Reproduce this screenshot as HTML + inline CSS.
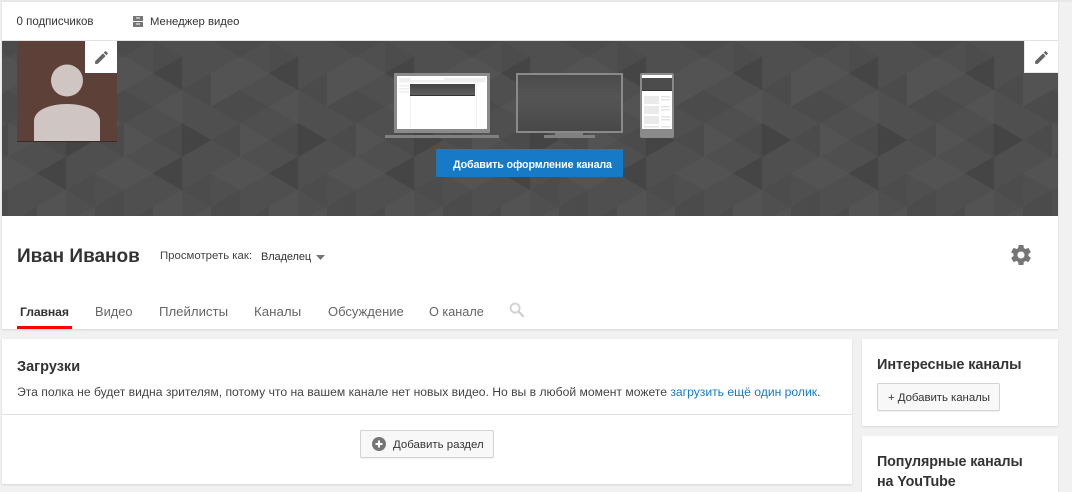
<!DOCTYPE html>
<html lang="ru"><head><meta charset="utf-8"><title>Канал</title>
<style>
html,body{margin:0;padding:0;width:1072px;height:492px;overflow:hidden;background:#f1f1f1;font-family:"Liberation Sans",sans-serif}
#w{position:absolute;left:0;top:0;width:1072px;height:492px;overflow:hidden;background:#f1f1f1}
.b{position:absolute;background:#fff}
.t{position:absolute;white-space:nowrap;line-height:16px;height:16px}
svg{position:absolute;display:block}
.card{box-shadow:0 1px 2px rgba(0,0,0,.12)}
.btn{position:absolute;box-sizing:border-box;background:#f8f8f8;border:1px solid #d3d3d3;border-radius:2px;box-shadow:0 1px 0 rgba(0,0,0,.05)}
</style></head><body><div id="w">
<div class="b" style="left:0;top:0;width:1072px;height:2px;background:#e8e8e8"></div>
<div class="b card" style="left:2px;top:2px;width:1056px;height:327px"></div>
<div class="b" style="left:2px;top:40px;width:1056px;height:1px;background:#e2e2e2"></div>

<svg style="left:2px;top:41px" width="1056" height="175" viewBox="2 41 1056 175">
<defs><pattern id="p" patternUnits="userSpaceOnUse" x="124" y="0" width="116" height="400">
<rect width="116" height="400" fill="#4f4f4f"/>
<g stroke-width=".4">
<polygon points="0,23.3 0,56.7 29,40" fill="#4b4b4b" stroke="#4b4b4b"/>
<polygon points="0,56.7 0,90 29,73.3" fill="#535353" stroke="#535353"/>
<polygon points="0,90 0,123.3 29,106.7" fill="#4b4b4b" stroke="#4b4b4b"/>
<polygon points="0,123.3 0,156.7 29,140" fill="#535353" stroke="#535353"/>
<polygon points="0,156.7 0,190 29,173.3" fill="#535353" stroke="#535353"/>
<polygon points="29,206.7 29,240 0,223.3" fill="#4b4b4b" stroke="#4b4b4b"/>
<polygon points="29,40 29,73.3 58,56.7" fill="#4c4c4c" stroke="#4c4c4c"/>
<polygon points="29,206.7 29,240 58,223.3" fill="#535353" stroke="#535353"/>
<polygon points="58,56.7 58,90 29,73.3" fill="#454545" stroke="#454545"/>
<polygon points="58,90 58,123.3 29,106.7" fill="#535353" stroke="#535353"/>
<polygon points="58,123.3 58,156.7 29,140" fill="#4b4b4b" stroke="#4b4b4b"/>
<polygon points="58,156.7 58,190 29,173.3" fill="#454545" stroke="#454545"/>
<polygon points="58,190 58,223.3 29,206.7" fill="#535353" stroke="#535353"/>
<polygon points="58,123.3 58,156.7 87,140" fill="#444" stroke="#444"/>
<polygon points="87,73.3 87,106.7 58,90" fill="#4b4b4b" stroke="#4b4b4b"/>
<polygon points="87,173.3 87,206.7 58,190" fill="#4c4c4c" stroke="#4c4c4c"/>
<polygon points="87,206.7 87,240 58,223.3" fill="#535353" stroke="#535353"/>
<polygon points="87,73.3 87,106.7 116,90" fill="#535353" stroke="#535353"/>
<polygon points="87,206.7 87,240 116,223.3" fill="#4b4b4b" stroke="#4b4b4b"/>
<polygon points="116,23.3 116,56.7 87,40" fill="#4b4b4b" stroke="#4b4b4b"/>
<polygon points="116,56.7 116,90 87,73.3" fill="#535353" stroke="#535353"/>
<polygon points="116,90 116,123.3 87,106.7" fill="#4b4b4b" stroke="#4b4b4b"/>
<polygon points="116,123.3 116,156.7 87,140" fill="#4b4b4b" stroke="#4b4b4b"/>
<polygon points="116,156.7 116,190 87,173.3" fill="#535353" stroke="#535353"/>
<polygon points="116,190 116,223.3 87,206.7" fill="#4b4b4b" stroke="#4b4b4b"/>
</g></pattern>
<linearGradient id="g" x1="0" y1="0" x2="0" y2="1"><stop offset="0" stop-color="#444"/><stop offset="1" stop-color="#5f5f5f"/></linearGradient>
<linearGradient id="tv" x1="0" y1="0" x2="0" y2="1"><stop offset="0" stop-color="#4b4b4b"/><stop offset=".4" stop-color="#555"/><stop offset="1" stop-color="#484848"/></linearGradient>
</defs>
<rect x="2" y="41" width="1056" height="175" fill="url(#p)"/>
<!-- laptop -->
<rect x="394" y="73" width="96" height="60" rx="1" fill="#8a8a8a"/>
<rect x="397" y="76" width="90" height="53" fill="#fff"/>
<rect x="399" y="78" width="86" height="4.5" fill="#efefef"/>
<rect x="411" y="78" width="33" height="2" fill="#fff"/>
<rect x="399" y="85" width="10" height="1.5" fill="#eee"/><rect x="399" y="88" width="10" height="1.5" fill="#eee"/><rect x="399" y="91" width="10" height="1.5" fill="#eee"/>
<rect x="410" y="84" width="65" height="11" fill="url(#g)"/>
<rect x="410" y="95" width="65" height="1" fill="#333"/>
<rect x="410" y="96" width="1" height="32" fill="#f2f2f2"/><rect x="476" y="84" width="1" height="44" fill="#f2f2f2"/>
<rect x="385" y="135" width="114" height="3" fill="#808080"/>
<!-- tv -->
<rect x="516" y="73" width="107" height="60" fill="#8a8a8a"/>
<rect x="518" y="75" width="103" height="56" fill="url(#tv)"/>
<rect x="555" y="133" width="28" height="2" fill="#808080"/>
<rect x="544" y="135" width="51" height="3" fill="#808080"/>
<!-- phone -->
<rect x="640" y="73" width="34" height="65" rx="2" fill="#8a8a8a"/>
<rect x="642" y="75" width="30" height="54" fill="#fff"/>
<rect x="642" y="78" width="30" height="12" fill="#4c4c4c"/>
<rect x="642" y="90" width="30" height="1" fill="#333"/>
<rect x="644" y="96" width="15" height="8" fill="#eaeaea"/><rect x="644" y="106" width="15" height="8" fill="#eaeaea"/><rect x="644" y="116" width="15" height="8" fill="#eaeaea"/>
<rect x="661" y="96" width="9" height="1.5" fill="#e4e4e4"/><rect x="661" y="99" width="9" height="1.5" fill="#e4e4e4"/>
<rect x="661" y="106" width="9" height="1.5" fill="#e4e4e4"/><rect x="661" y="109" width="9" height="1.5" fill="#e4e4e4"/>
<rect x="661" y="116" width="9" height="1.5" fill="#e4e4e4"/><rect x="661" y="119" width="9" height="1.5" fill="#e4e4e4"/>
<rect x="644" y="126" width="15" height="1.5" fill="#e4e4e4"/><rect x="661" y="126" width="9" height="1.5" fill="#e4e4e4"/>
<!-- avatar -->
<rect x="17" y="41" width="100" height="100" fill="#5d4037"/>
<rect x="17" y="141" width="100" height="1" fill="#3a2a25"/>
<circle cx="67" cy="80.500" r="16" fill="#cfc6c3"/>
<path d="M34 141V121C34 110 50 104 67 104S100 110 100 121V141Z" fill="#cfc6c3"/>
</svg>

<div class="b" style="left:85px;top:41px;width:32px;height:32px"></div>
<svg style="left:93px;top:49px" width="17" height="17" viewBox="0 0 24 24"><path fill="#666" d="M3 17.25V21h3.75L17.81 9.94l-3.75-3.750L3 17.250zM20.710 7.040c.39-.39.39-1.020 0-1.410l-2.340-2.340c-.39-.39-1.020-.39-1.410 0l-1.830 1.830 3.750 3.750 1.830-1.830z"/></svg>
<div class="b" style="left:1024px;top:41px;width:34px;height:32px;border-left:1px solid #e8e8e8;border-bottom:1px solid #e8e8e8;box-sizing:border-box"></div>
<svg style="left:1033px;top:49px" width="17" height="17" viewBox="0 0 24 24"><path fill="#666" d="M3 17.25V21h3.75L17.81 9.94l-3.75-3.750L3 17.250zM20.710 7.040c.39-.39.39-1.020 0-1.410l-2.340-2.340c-.39-.39-1.020-.39-1.410 0l-1.830 1.830 3.750 3.750 1.830-1.830z"/></svg>

<span class="t" style="left:16.500px;top:14px;font-size:11.500px;color:#333">0 подписчиков</span>
<svg style="left:133px;top:16px" width="10" height="11" viewBox="0 0 10 11"><path fill="#767676" fill-rule="evenodd" d="M0 0H10V5H0ZM3 1.500V2.500H7V1.500ZM0 6H10V11H0ZM3 7.500V8.500H7V7.500Z"/></svg>
<span class="t" style="left:150px;top:14px;font-size:11.300px;color:#333">Менеджер видео</span>

<div style="position:absolute;left:436px;top:149px;width:187px;height:28px;background:#167ac6;border-radius:1px"></div>
<span class="t" style="left:453px;top:157px;font-size:10.700px;font-weight:bold;color:#fff;letter-spacing:-.13px">Добавить оформление канала</span>

<span class="t" style="left:17px;top:245px;height:24px;line-height:24px;font-size:19px;font-weight:bold;color:#333">Иван Иванов</span>
<span class="t" style="left:160px;top:248px;font-size:11.400px;color:#444">Просмотреть как:</span>
<span class="t" style="left:261px;top:249px;font-size:11px;color:#333;letter-spacing:-.1px">Владелец</span>
<svg style="left:316px;top:255px" width="9" height="5" viewBox="0 0 9 5"><path fill="#767676" d="M0 0H9L4.500 5Z"/></svg>
<svg style="left:1009px;top:243px" width="24" height="24" viewBox="0 0 24 24"><path fill="#767676" d="M19.43 12.98c.04-.32.07-.64.07-.98s-.03-.66-.07-.98l2.11-1.650c.19-.15.24-.42.12-.64l-2-3.460c-.12-.22-.39-.3-.61-.22l-2.490 1c-.52-.4-1.080-.73-1.690-.98l-.38-2.650C14.460 2.180 14.250 2 14 2h-4c-.25 0-.46.18-.49.42l-.38 2.650c-.61.25-1.170.59-1.690.98l-2.490-1c-.23-.09-.49 0-.61.22l-2 3.460c-.13.22-.07.49.12.64l2.110 1.650c-.04.32-.07.65-.07.98s.03.66.07.98l-2.110 1.650c-.19.15-.24.42-.12.64l2 3.460c.12.22.39.3.61.22l2.490-1c.52.4 1.080.73 1.690.98l.38 2.650c.03.24.24.42.49.42h4c.25 0 .46-.18.49-.42l.38-2.650c.61-.25 1.170-.59 1.690-.98l2.490 1c.23.09.49 0 .61-.22l2-3.460c.12-.22.07-.49-.12-.64l-2.010-1.650zM12 15.500c-1.930 0-3.500-1.570-3.500-3.500s1.570-3.500 3.500-3.500 3.500 1.570 3.500 3.500-1.570 3.500-3.500 3.500z"/></svg>

<span class="t" style="left:20px;top:304px;font-size:12.200px;font-weight:bold;color:#333;letter-spacing:-.1px">Главная</span>
<span class="t" style="left:95px;top:304px;font-size:12.850px;color:#666">Видео</span>
<span class="t" style="left:159px;top:304px;font-size:13.200px;color:#666">Плейлисты</span>
<span class="t" style="left:254px;top:304px;font-size:13.300px;color:#666">Каналы</span>
<span class="t" style="left:328px;top:304px;font-size:13px;color:#666">Обсуждение</span>
<span class="t" style="left:429px;top:304px;font-size:12.700px;color:#666">О канале</span>
<svg style="left:509px;top:302px" width="16" height="16" viewBox="0 0 17 17"><circle cx="6.500" cy="6.500" r="4.800" fill="none" stroke="#d2d2d2" stroke-width="2"/><path d="M10 10L15 15" stroke="#d2d2d2" stroke-width="2.500" stroke-linecap="round"/></svg>
<div style="position:absolute;left:17px;top:326px;width:55px;height:3px;background:#f00"></div>

<div class="b card" style="left:2px;top:339px;width:850px;height:145px"></div>
<span class="t" style="left:17px;top:359px;font-size:14.500px;font-weight:bold;color:#333">Загрузки</span>
<span class="t" style="left:17px;top:384px;font-size:12.150px;color:#444">Эта полка не будет видна зрителям, потому что на вашем канале нет новых видео. Но вы в любой момент можете <span style="color:#167ac6">загрузить ещё один ролик</span>.</span>
<div style="position:absolute;left:2px;top:414px;width:850px;height:1px;background:#e2e2e2"></div>
<div class="btn" style="left:360px;top:430px;width:134px;height:28px"></div>
<svg style="left:372px;top:437px" width="14" height="14" viewBox="0 0 14 14"><circle cx="7" cy="7" r="7" fill="#767676"/><path d="M3.500 7H10.500M7 3.500V10.500" stroke="#fff" stroke-width="2"/></svg>
<span class="t" style="left:393px;top:437px;font-size:11.450px;color:#333">Добавить раздел</span>

<div class="b card" style="left:862px;top:339px;width:196px;height:87px"></div>
<span class="t" style="left:877px;top:357px;font-size:14.500px;font-weight:bold;color:#333;letter-spacing:-.1px">Интересные каналы</span>
<div class="btn" style="left:877px;top:383px;width:123px;height:28px"></div>
<span class="t" style="left:888px;top:390px;font-size:11.450px;color:#333;letter-spacing:-.05px">+ Добавить каналы</span>

<div class="b" style="left:862px;top:436px;width:196px;height:56px;box-shadow:0 1px 2px rgba(0,0,0,.12)"></div>
<span class="t" style="left:877px;top:454px;font-size:14.300px;font-weight:bold;color:#333;letter-spacing:-.1px">Популярные каналы</span>
<span class="t" style="left:877px;top:474px;font-size:14.300px;font-weight:bold;color:#333;letter-spacing:-.1px">на YouTube</span>
</div></body></html>
